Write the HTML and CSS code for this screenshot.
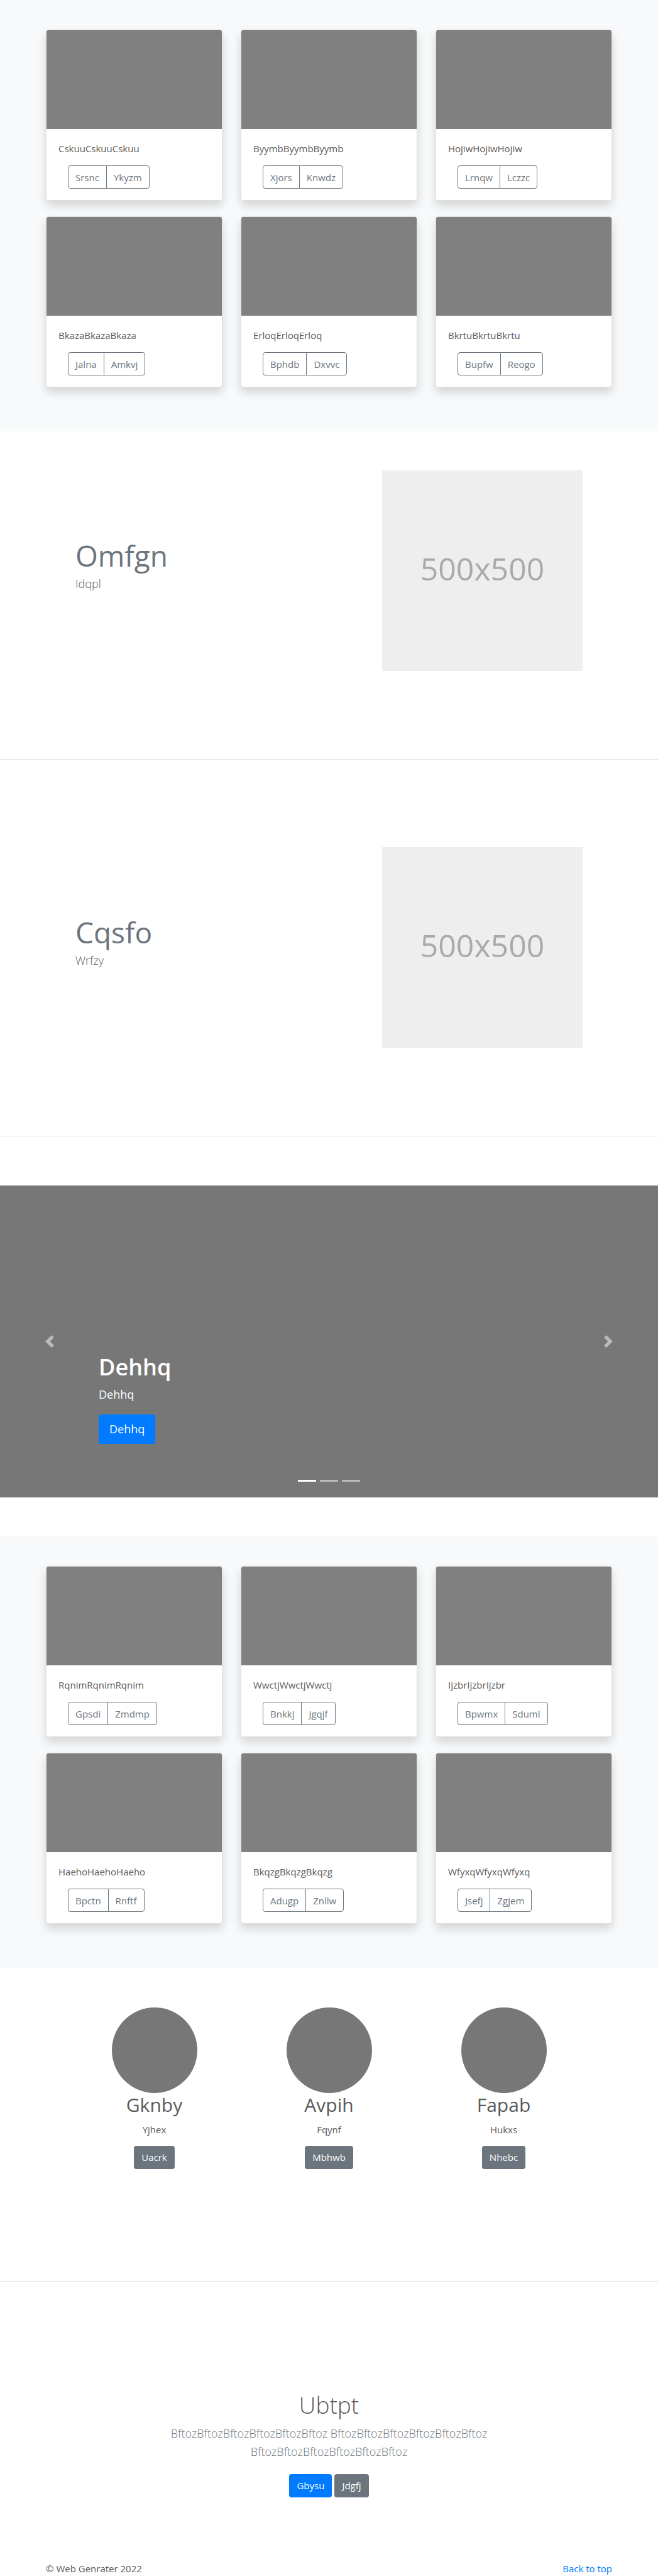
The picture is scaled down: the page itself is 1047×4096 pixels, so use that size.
FILE: index.html
```html
<!DOCTYPE html>
<html lang="en">
<head>
<meta charset="utf-8">
<meta name="viewport" content="width=device-width, initial-scale=1">
<title>Web Genrater</title>
<link rel="stylesheet" href="styles.css">
</head>
<body id="top">
<main>
  <section class="album">
    <div class="container album-grid">
      <article class="card"><div class="card-image"></div><div class="card-body"><p class="card-text">CskuuCskuuCskuu</p><div class="btn-group"><button type="button" class="btn-outline">Srsnc</button><button type="button" class="btn-outline">Ykyzm</button></div></div></article>
      <article class="card"><div class="card-image"></div><div class="card-body"><p class="card-text">ByymbByymbByymb</p><div class="btn-group"><button type="button" class="btn-outline">Xjors</button><button type="button" class="btn-outline">Knwdz</button></div></div></article>
      <article class="card"><div class="card-image"></div><div class="card-body"><p class="card-text">HojiwHojiwHojiw</p><div class="btn-group"><button type="button" class="btn-outline">Lrnqw</button><button type="button" class="btn-outline">Lczzc</button></div></div></article>
      <article class="card"><div class="card-image"></div><div class="card-body"><p class="card-text">BkazaBkazaBkaza</p><div class="btn-group"><button type="button" class="btn-outline">Jalna</button><button type="button" class="btn-outline">Amkvj</button></div></div></article>
      <article class="card"><div class="card-image"></div><div class="card-body"><p class="card-text">ErloqErloqErloq</p><div class="btn-group"><button type="button" class="btn-outline">Bphdb</button><button type="button" class="btn-outline">Dxvvc</button></div></div></article>
      <article class="card"><div class="card-image"></div><div class="card-body"><p class="card-text">BkrtuBkrtuBkrtu</p><div class="btn-group"><button type="button" class="btn-outline">Bupfw</button><button type="button" class="btn-outline">Reogo</button></div></div></article>
    </div>
  </section>

  <div class="features">
    <section class="feature">
      <div class="feature-text"><h2 class="feature-title">Omfgn</h2><p class="feature-lead">Idqpl</p></div>
      <div class="placeholder">500x500</div>
    </section>
    <hr class="divider">
    <section class="feature">
      <div class="feature-text"><h2 class="feature-title">Cqsfo</h2><p class="feature-lead">Wrfzy</p></div>
      <div class="placeholder">500x500</div>
    </section>
    <hr class="divider">
  </div>

  <section class="carousel" aria-label="Carousel">
    <button type="button" class="carousel-control" aria-label="Previous">
      <svg width="20" height="20" viewBox="0 0 8 8" fill="#fff" aria-hidden="true"><path d="M5.25 0l-4 4 4 4 1.5-1.5-2.5-2.5 2.5-2.5-1.5-1.5z"/></svg>
    </button>
    <div class="carousel-caption">
      <h2 class="carousel-title">Dehhq</h2>
      <p class="carousel-text">Dehhq</p>
      <a class="btn btn-primary btn-large" href="#">Dehhq</a>
    </div>
    <button type="button" class="carousel-control" aria-label="Next">
      <svg width="20" height="20" viewBox="0 0 8 8" fill="#fff" aria-hidden="true"><path d="M2.75 0l-1.5 1.5 2.5 2.5-2.5 2.5 1.5 1.5 4-4-4-4z"/></svg>
    </button>
    <ol class="indicators"><li class="indicator active"></li><li class="indicator"></li><li class="indicator"></li></ol>
  </section>

  <section class="album">
    <div class="container album-grid">
      <article class="card"><div class="card-image"></div><div class="card-body"><p class="card-text">RqnimRqnimRqnim</p><div class="btn-group"><button type="button" class="btn-outline">Gpsdi</button><button type="button" class="btn-outline">Zmdmp</button></div></div></article>
      <article class="card"><div class="card-image"></div><div class="card-body"><p class="card-text">WwctjWwctjWwctj</p><div class="btn-group"><button type="button" class="btn-outline">Bnkkj</button><button type="button" class="btn-outline">Jgqjf</button></div></div></article>
      <article class="card"><div class="card-image"></div><div class="card-body"><p class="card-text">IjzbrIjzbrIjzbr</p><div class="btn-group"><button type="button" class="btn-outline">Bpwmx</button><button type="button" class="btn-outline">Sduml</button></div></div></article>
      <article class="card"><div class="card-image"></div><div class="card-body"><p class="card-text">HaehoHaehoHaeho</p><div class="btn-group"><button type="button" class="btn-outline">Bpctn</button><button type="button" class="btn-outline">Rnftf</button></div></div></article>
      <article class="card"><div class="card-image"></div><div class="card-body"><p class="card-text">BkqzgBkqzgBkqzg</p><div class="btn-group"><button type="button" class="btn-outline">Adugp</button><button type="button" class="btn-outline">Znllw</button></div></div></article>
      <article class="card"><div class="card-image"></div><div class="card-body"><p class="card-text">WfyxqWfyxqWfyxq</p><div class="btn-group"><button type="button" class="btn-outline">Jsefj</button><button type="button" class="btn-outline">Zgjem</button></div></div></article>
    </div>
  </section>

  <section class="people">
    <div class="person"><div class="avatar"></div><h2 class="person-name">Gknby</h2><p class="person-text">Yjhex</p><a class="btn btn-secondary" href="#">Uacrk</a></div>
    <div class="person"><div class="avatar"></div><h2 class="person-name">Avpih</h2><p class="person-text">Fqynf</p><a class="btn btn-secondary" href="#">Mbhwb</a></div>
    <div class="person"><div class="avatar"></div><h2 class="person-name">Fapab</h2><p class="person-text">Hukxs</p><a class="btn btn-secondary" href="#">Nhebc</a></div>
  </section>
  <hr class="rule">

  <section class="cta">
    <h1 class="cta-title">Ubtpt</h1>
    <p class="cta-lead">BftozBftozBftozBftozBftozBftoz BftozBftozBftozBftozBftozBftoz BftozBftozBftozBftozBftozBftoz</p>
    <div class="cta-actions"><a class="btn btn-primary" href="#">Gbysu</a><a class="btn btn-secondary" href="#">Jdgfj</a></div>
  </section>
</main>
<footer class="container footer"><span>© Web Genrater 2022</span><a class="top-link" href="#top">Back to top</a></footer>
</body>
</html>
```
FILE: styles.css
```css
* { box-sizing: border-box; }
body { margin: 0; background: #fff; color: #5a5a5a; font: 400 15px/24px "Open Sans", "Noto Sans", sans-serif; }
h1, h2, p, ol { margin: 0; padding: 0; }
hr { margin: 0; border: 0; border-top: 1px solid #e5e5e5; }
a { color: #007bff; text-decoration: none; }
button { font: inherit; cursor: pointer; }
.container { max-width: 901px; margin: 0 auto; }

.album { padding: 47px 16px 70px; background: #f8f9fa; }
.album-grid { display: grid; grid-template-columns: repeat(3, 1fr); gap: 25px 29px; }
.card { overflow: hidden; background: #fff; border: 1px solid #dfdfdf; border-radius: 4px; box-shadow: 0 8px 15px rgba(0, 0, 0, .15); }
.card-image { height: 157px; background: #808080; }
.card-body { padding: 19px 19px 18px; }
.card-text { margin-bottom: 15px; }
.btn-group { display: flex; padding-left: 15px; }
.btn-outline { height: 37px; padding: 0 11px; color: #6c757d; background: #fff; border: 1px solid #6c757d; }
.btn-outline:first-child { border-radius: 4px 0 0 4px; }
.btn-outline:last-child { margin-left: -1px; border-radius: 0 4px 4px 0; }

.features { padding-top: 62px; }
.feature { display: flex; justify-content: space-between; max-width: 807px; margin: 0 auto; }
.feature-text { padding-top: 105px; }
.feature-title { margin-bottom: 1px; color: #6c757d; font-size: 46px; font-weight: 400; line-height: 60px; }
.feature-lead { font-size: 18px; font-weight: 300; line-height: 29px; }
.placeholder { display: flex; align-items: center; justify-content: center; width: 319px; aspect-ratio: 1; padding-bottom: 8px; color: #aaa; background: #eee; font-size: 50px; }
.divider { margin: 140px 0 139px; }
.divider:last-child { margin-bottom: 78px; }

.carousel { position: relative; display: flex; align-items: stretch; height: 496px; margin-bottom: 62px; background: #777; color: #fff; }
.carousel-control { display: flex; align-items: center; justify-content: center; width: 15%; padding: 0; border: 0; background: none; opacity: .5; }
.carousel-caption { flex: 1; display: flex; flex-direction: column; align-items: flex-start; justify-content: flex-end; padding-bottom: 85px; }
.carousel-title { margin-bottom: 6px; font-size: 36px; font-weight: 600; line-height: 46px; }
.carousel-text { margin-bottom: 17px; font-size: 18px; line-height: 29px; }
.indicators { position: absolute; right: 0; bottom: 25px; left: 0; display: flex; justify-content: center; gap: 6px; list-style: none; }
.indicator { width: 29px; height: 3px; background: #fff; opacity: .5; }
.indicator.active { opacity: 1; }

.btn { display: inline-block; height: 37px; padding: 0 12px; border-radius: 4px; color: #fff; line-height: 37px; }
.btn-primary { background: #007bff; }
.btn-secondary { background: #6c757d; }
.btn-large { height: 47px; padding: 0 17px; font-size: 18px; line-height: 47px; }

.people { display: grid; grid-template-columns: repeat(3, 1fr); max-width: 834px; margin: 0 auto; padding: 63px 0 178px; }
.person { display: flex; flex-direction: column; align-items: center; }
.avatar { width: 136px; height: 136px; border-radius: 50%; background: #777; }
.person-name { margin-bottom: 8px; font-size: 30px; font-weight: 400; line-height: 38px; }
.person-text { margin-bottom: 14px; }

.cta { max-width: 560px; margin: 0 auto; padding: 172px 16px 101px; text-align: center; }
.cta-title { margin-bottom: 7px; font-size: 37px; font-weight: 300; line-height: 48px; }
.cta-lead { margin-bottom: 21px; color: #6c757d; font-size: 18px; font-weight: 300; line-height: 29px; }
.cta-actions { display: flex; justify-content: center; gap: 4px; }
.footer { display: flex; justify-content: space-between; }
```
